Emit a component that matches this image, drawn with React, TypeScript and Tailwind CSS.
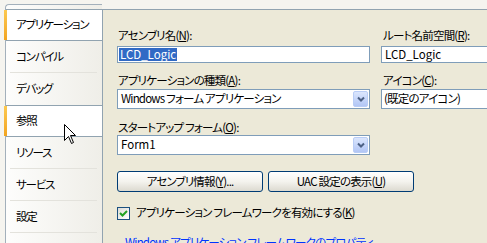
import React from "react";

const font = "font-['Noto_Sans_CJK_JP','Liberation_Sans',sans-serif] [font-feature-settings:'palt'] tracking-[-0.8px]";

function U({ c }: { c: string }) {
  return <span className="underline underline-offset-[1px]">{c}</span>;
}

function Chevron() {
  return (
    <div className="w-[15px] h-[16px] rounded-[2px] border border-[#b9cdf6] bg-gradient-to-b from-[#dbe6fd] to-[#b2c6f5] flex items-center justify-center">
      <svg width="8" height="6" viewBox="0 0 8 6">
        <path d="M1 1.5 L4 4.5 L7 1.5" fill="none" stroke="#4d6185" strokeWidth="2" />
      </svg>
    </div>
  );
}

function Tab({ label, active, hover, sep }: { label: string; active?: boolean; hover?: boolean; sep?: boolean }) {
  if (active || hover) {
    return (
      <div className="relative h-[32px] bg-white border-y border-[#91a3b0] flex items-center pl-[10px] text-[11.5px] tracking-[-1.2px] text-black whitespace-nowrap">
        <div className="absolute left-[-2px] top-0 bottom-0 w-[3px] bg-gradient-to-b from-[#fcc94f] to-[#f2a41e]" />
        {label}
      </div>
    );
  }
  return (
    <div className="relative h-[32px] flex items-center pl-[10px] text-[11.5px] tracking-[-1.2px] text-black whitespace-nowrap">
      {label}
      {sep && <div className="absolute left-[4px] right-[5px] bottom-0 h-px bg-[#e3e2dc]" />}
    </div>
  );
}

export default function App() {
  return (
    <div className={`relative w-[487px] h-[243px] overflow-hidden bg-[#f5f4ef] ${font}`}>
      <div className="flex h-full pt-[4px] pl-[5px]">
        {/* tab column */}
        <div className="w-[97px] shrink-0 border-l border-t border-[#a3b0bb] rounded-tl-[4px] bg-gradient-to-r from-[#fdfdfc] to-[#efeee8] pt-[4px]">
          <Tab label="アプリケーション" active />
          <Tab label="コンパイル" sep />
          <Tab label="デバッグ" />
          <Tab label="参照" hover />
          <Tab label="リソース" sep />
          <Tab label="サービス" sep />
          <Tab label="設定" sep />
          <Tab label="" />
        </div>
        {/* content */}
        <div className="flex-1 mt-[5px] border-t border-l border-[#91a3b0] bg-[#ece9d8] text-[11.5px] text-black">
          <div className="flex gap-[11px] pl-[14px]">
            {/* left column */}
            <div className="w-[253px] shrink-0 flex flex-col">
              <div className="mt-[18px] h-[14px] leading-[14px] pl-[1px]">アセンブリ名(<U c="N" />):</div>
              <div className="mt-[4px] h-[17px] border border-[#7f9db9] bg-white flex items-center pl-[1px]">
                <span className="bg-[#316ac5] text-white leading-[13px] px-[1px] tracking-normal">LCD_Logic</span>
              </div>
              <div className="mt-[10px] h-[14px] leading-[14px] pl-[1px]">アプリケーションの種類(<U c="A" />):</div>
              <div className="mt-[2px] h-[20px] border border-[#7f9db9] bg-white flex items-center justify-between pl-[3px] pr-px">
                <span>Windows フォーム アプリケーション</span>
                <Chevron />
              </div>
              <div className="mt-[11px] h-[14px] leading-[14px] pl-[1px]">スタートアップ フォーム(<U c="O" />):</div>
              <div className="mt-[1px] h-[20px] border border-[#7f9db9] bg-white flex items-center justify-between pl-[3px] pr-px">
                <span className="tracking-normal">Form1</span>
                <Chevron />
              </div>
              <div className="mt-[16px] flex gap-[5px]">
                <div className="w-[146px] h-[21px] shrink-0 rounded-[3px] border border-[#003c74] bg-gradient-to-b from-[#ffffff] via-[#f4f3ee] to-[#dcdad0] flex items-center justify-center">
                  アセンブリ情報(<U c="Y" />)...
                </div>
                <div className="w-[146px] h-[21px] shrink-0 rounded-[3px] border border-[#003c74] bg-gradient-to-b from-[#ffffff] via-[#f4f3ee] to-[#dcdad0] flex items-center justify-center">
                  UAC 設定の表示(<U c="U" />)
                </div>
              </div>
              <div className="mt-[14px] flex items-center gap-[6px] h-[14px]">
                <div className="w-[13px] h-[13px] shrink-0 border border-[#1c5180] bg-gradient-to-br from-[#dcdcd7] to-white flex items-center justify-center">
                  <svg width="9" height="9" viewBox="0 0 9 9">
                    <path d="M1 4 L3.5 6.5 L8 2" fill="none" stroke="#21a121" strokeWidth="2" />
                  </svg>
                </div>
                <span className="whitespace-nowrap">アプリケーション フレームワークを有効にする(<U c="K" />)</span>
              </div>
              <div className="mt-[15px] pl-[8px] whitespace-nowrap text-[#0033ff] leading-[14px]">
                Windows アプリケーション フレームワークのプロパティ
              </div>
            </div>
            {/* right column */}
            <div className="w-[140px] shrink-0 flex flex-col">
              <div className="mt-[18px] h-[14px] leading-[14px] pl-[2px]">ルート名前空間(<U c="R" />):</div>
              <div className="mt-[4px] h-[17px] border border-[#7f9db9] bg-white flex items-center pl-[3px] tracking-normal">
                LCD_Logic
              </div>
              <div className="mt-[10px] h-[14px] leading-[14px] pl-[2px]">アイコン(<U c="C" />):</div>
              <div className="mt-[2px] h-[20px] border border-[#7f9db9] bg-white flex items-center pl-[2px]">
                (既定のアイコン)
              </div>
            </div>
          </div>
        </div>
      </div>
      {/* mouse cursor */}
      <svg className="absolute left-[64px] top-[124px]" width="13" height="21" viewBox="0 0 13 21">
        <path d="M0.5 0.5 L0.5 16.5 L4.5 12.5 L7.5 19.5 L9.5 18.5 L6.5 11.5 L11.5 11.5 Z" fill="white" stroke="black" strokeWidth="1" />
      </svg>
    </div>
  );
}
